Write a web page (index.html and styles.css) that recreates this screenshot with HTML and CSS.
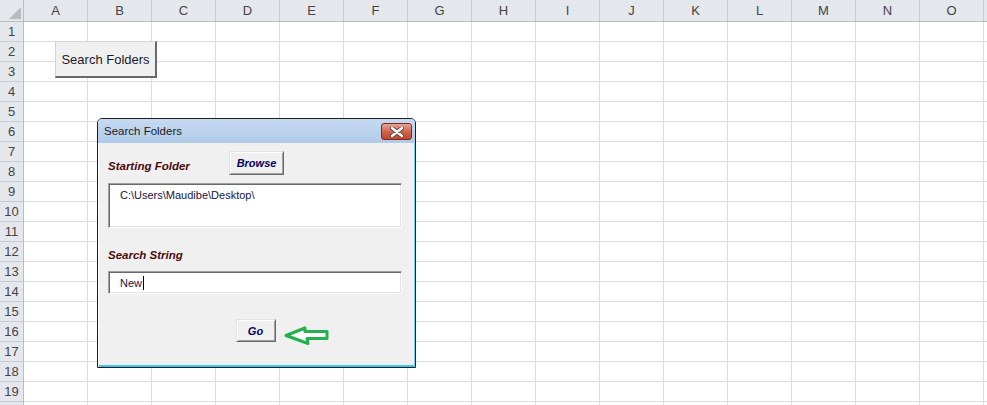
FILE: index.html
```html
<!DOCTYPE html>
<html lang="en">
<head>
  <meta charset="UTF-8">
  <title>Search Folders</title>
  <link rel="stylesheet" href="styles.css">
</head>
<body>
  <div class="sheet">
    <div class="corner">
      <svg class="corner-mark" width="12" height="12" viewBox="0 0 12 12"><polygon points="12,0 12,12 0,12" fill="#b8bcc2"/></svg>
    </div>
    <div class="col-heads">
      <div class="col-head">A</div>
      <div class="col-head">B</div>
      <div class="col-head">C</div>
      <div class="col-head">D</div>
      <div class="col-head">E</div>
      <div class="col-head">F</div>
      <div class="col-head">G</div>
      <div class="col-head">H</div>
      <div class="col-head">I</div>
      <div class="col-head">J</div>
      <div class="col-head">K</div>
      <div class="col-head">L</div>
      <div class="col-head">M</div>
      <div class="col-head">N</div>
      <div class="col-head">O</div>
      <div class="col-head col-tail"></div>
    </div>
    <div class="row-heads">
      <div class="row-head">1</div>
      <div class="row-head">2</div>
      <div class="row-head">3</div>
      <div class="row-head">4</div>
      <div class="row-head">5</div>
      <div class="row-head">6</div>
      <div class="row-head">7</div>
      <div class="row-head">8</div>
      <div class="row-head">9</div>
      <div class="row-head">10</div>
      <div class="row-head">11</div>
      <div class="row-head">12</div>
      <div class="row-head">13</div>
      <div class="row-head">14</div>
      <div class="row-head">15</div>
      <div class="row-head">16</div>
      <div class="row-head">17</div>
      <div class="row-head">18</div>
      <div class="row-head">19</div>
      <div class="row-head"></div>
    </div>
    <div class="cells"></div>
  </div>

  <button class="sheet-button">Search Folders</button>

  <div class="dialog">
    <div class="titlebar">
      <span class="title">Search Folders</span>
      <span class="close">
        <svg width="14" height="10" viewBox="0 0 14 10">
          <path d="M2 1 L12 9 M12 1 L2 9" stroke="#4a4a4a" stroke-width="4.2" stroke-linecap="round"/>
          <path d="M2 1 L12 9 M12 1 L2 9" stroke="#fff" stroke-width="2.4" stroke-linecap="round"/>
        </svg>
      </span>
    </div>
    <div class="dialog-body">
      <div class="field-row">
        <span class="label folder-label">Starting Folder</span>
        <span class="btn browse">Browse</span>
      </div>
      <div class="textbox path-box">C:\Users\Maudibe\Desktop\</div>
      <div class="label search-label">Search String</div>
      <div class="textbox search-box">New<span class="caret"></span></div>
      <div class="go-row">
        <span class="btn go">Go</span>
        <svg class="arrow" width="46" height="20" viewBox="0 0 46 20">
          <polygon points="2,9.5 21,2 21,5.5 43,5.5 43,12.5 23,12.5 24,17.5" fill="#fff" stroke="#22b14c" stroke-width="3" stroke-linejoin="round"/>
        </svg>
      </div>
    </div>
  </div>
</body>
</html>
```

FILE: styles.css
```css
body {
  margin: 0;
  font-family: "Liberation Sans", Arial, sans-serif;
  background-color: #fff;
  width: 987px;
  height: 405px;
  overflow: hidden;
  position: relative;
}
.sheet {
  display: grid;
  grid-template-columns: 24px 963px;
  grid-template-rows: 22px 383px;
  overflow: hidden;
}
.corner {
  background-color: #e4e7eb;
  border-right: 1px solid #b9bdc3;
  border-bottom: 1px solid #b9bdc3;
  box-sizing: border-box;
  position: relative;
}
.corner-mark {
  position: absolute;
  right: 2px;
  bottom: 2px;
}
.col-heads {
  display: flex;
  background-color: #e4e7eb;
  border-bottom: 1px solid #b9bdc3;
  box-sizing: border-box;
  overflow: hidden;
}
.col-head {
  flex: 0 0 64px;
  box-sizing: border-box;
  border-right: 1px solid #c9cdd2;
  text-align: center;
  line-height: 21px;
  font-size: 13px;
  color: #444;
}
.col-tail {
  flex-basis: 3px;
  border-right: none;
}
.row-heads {
  display: flex;
  flex-direction: column;
  background-color: #e4e7eb;
  border-right: 1px solid #b9bdc3;
  box-sizing: border-box;
  overflow: hidden;
}
.row-head {
  flex: 0 0 20px;
  box-sizing: border-box;
  border-bottom: 1px solid #c9cdd2;
  line-height: 19px;
  text-align: center;
  font-size: 13px;
  color: #444;
}
.cells {
  background-image:
    linear-gradient(to right, #dadcdd 1px, transparent 1px),
    linear-gradient(to bottom, #dadcdd 1px, transparent 1px);
  background-size: 64px 20px;
  background-position: 63px 19px;
}

/* floating controls */
.sheet-button {
  position: absolute;
  left: 55px;
  top: 41px;
  width: 102px;
  height: 37px;
  padding: 0;
  font-family: "Liberation Sans", Arial, sans-serif;
  font-size: 13px;
  color: #1a1a2a;
  background-color: #f0f0f0;
  border-style: solid;
  border-width: 1px 2px 2px 1px;
  border-color: #d4d4d4 #6a6a6a #6a6a6a #d4d4d4;
}
.dialog {
  position: absolute;
  left: 97px;
  top: 118px;
  width: 319px;
  height: 250px;
  box-sizing: border-box;
  border: 1px solid #1e1e1e;
  border-radius: 5px 5px 0 0;
  background-color: #f0f0f0;
  box-shadow: inset 1px 0 #fdfdfd, inset -1px 0 #6fd2f2, inset 0 -2px #3ec5f0;
  display: flex;
  flex-direction: column;
}
.titlebar {
  height: 24px;
  display: flex;
  align-items: center;
  justify-content: space-between;
  padding: 0 3px 0 6px;
  background: linear-gradient(#c6daf0, #b0cbe9);
  border-radius: 4px 4px 0 0;
}
.title {
  font-size: 11.5px;
  color: #1b1b1b;
}
.close {
  width: 29px;
  height: 15px;
  margin-top: 1px;
  display: flex;
  align-items: center;
  justify-content: center;
  border: 1px solid #7a2b21;
  border-radius: 3px;
  background: linear-gradient(#e8a497, #d3654f 50%, #c3452f);
}
.dialog-body {
  padding: 8px 12px 0 10px;
  display: flex;
  flex-direction: column;
}
.field-row {
  display: flex;
  height: 24px;
}
.label {
  font-size: 11.5px;
  font-weight: bold;
  font-style: italic;
  color: #4a0a0a;
  line-height: 14px;
}
.folder-label {
  width: 121px;
  align-self: flex-end;
  margin-bottom: 2px;
}
.btn {
  display: flex;
  align-items: center;
  justify-content: center;
  box-sizing: border-box;
  font-size: 11px;
  font-weight: bold;
  font-style: italic;
  color: #000066;
  background-color: #f0f0f0;
  border: 1px solid;
  border-color: #e3e3e3 #696969 #696969 #e3e3e3;
  box-shadow: inset 1px 1px #fff, inset -1px -1px #a0a0a0;
}
.browse {
  width: 55px;
  height: 24px;
}
.textbox {
  width: 294px;
  box-sizing: border-box;
  background-color: #fff;
  border: 1px solid;
  border-color: #a0a0a0 #fff #fff #a0a0a0;
  box-shadow: inset 1px 1px #696969, inset -1px -1px #e3e3e3;
  font-size: 11px;
  color: #14143a;
}
.path-box {
  margin-top: 8px;
  height: 45px;
  padding: 4px 0 0 11px;
  line-height: 14px;
}
.search-label {
  margin-top: 20px;
}
.search-box {
  margin-top: 9px;
  height: 23px;
  padding-left: 11px;
  display: flex;
  align-items: center;
}
.caret {
  display: inline-block;
  width: 0;
  height: 14px;
  margin-left: 1px;
  border-left: 1px solid #000;
}
.go-row {
  margin-top: 25px;
  display: flex;
  justify-content: center;
  position: relative;
}
.go {
  width: 40px;
  height: 23px;
}
.arrow {
  position: absolute;
  left: 176px;
  top: 7px;
}
```
